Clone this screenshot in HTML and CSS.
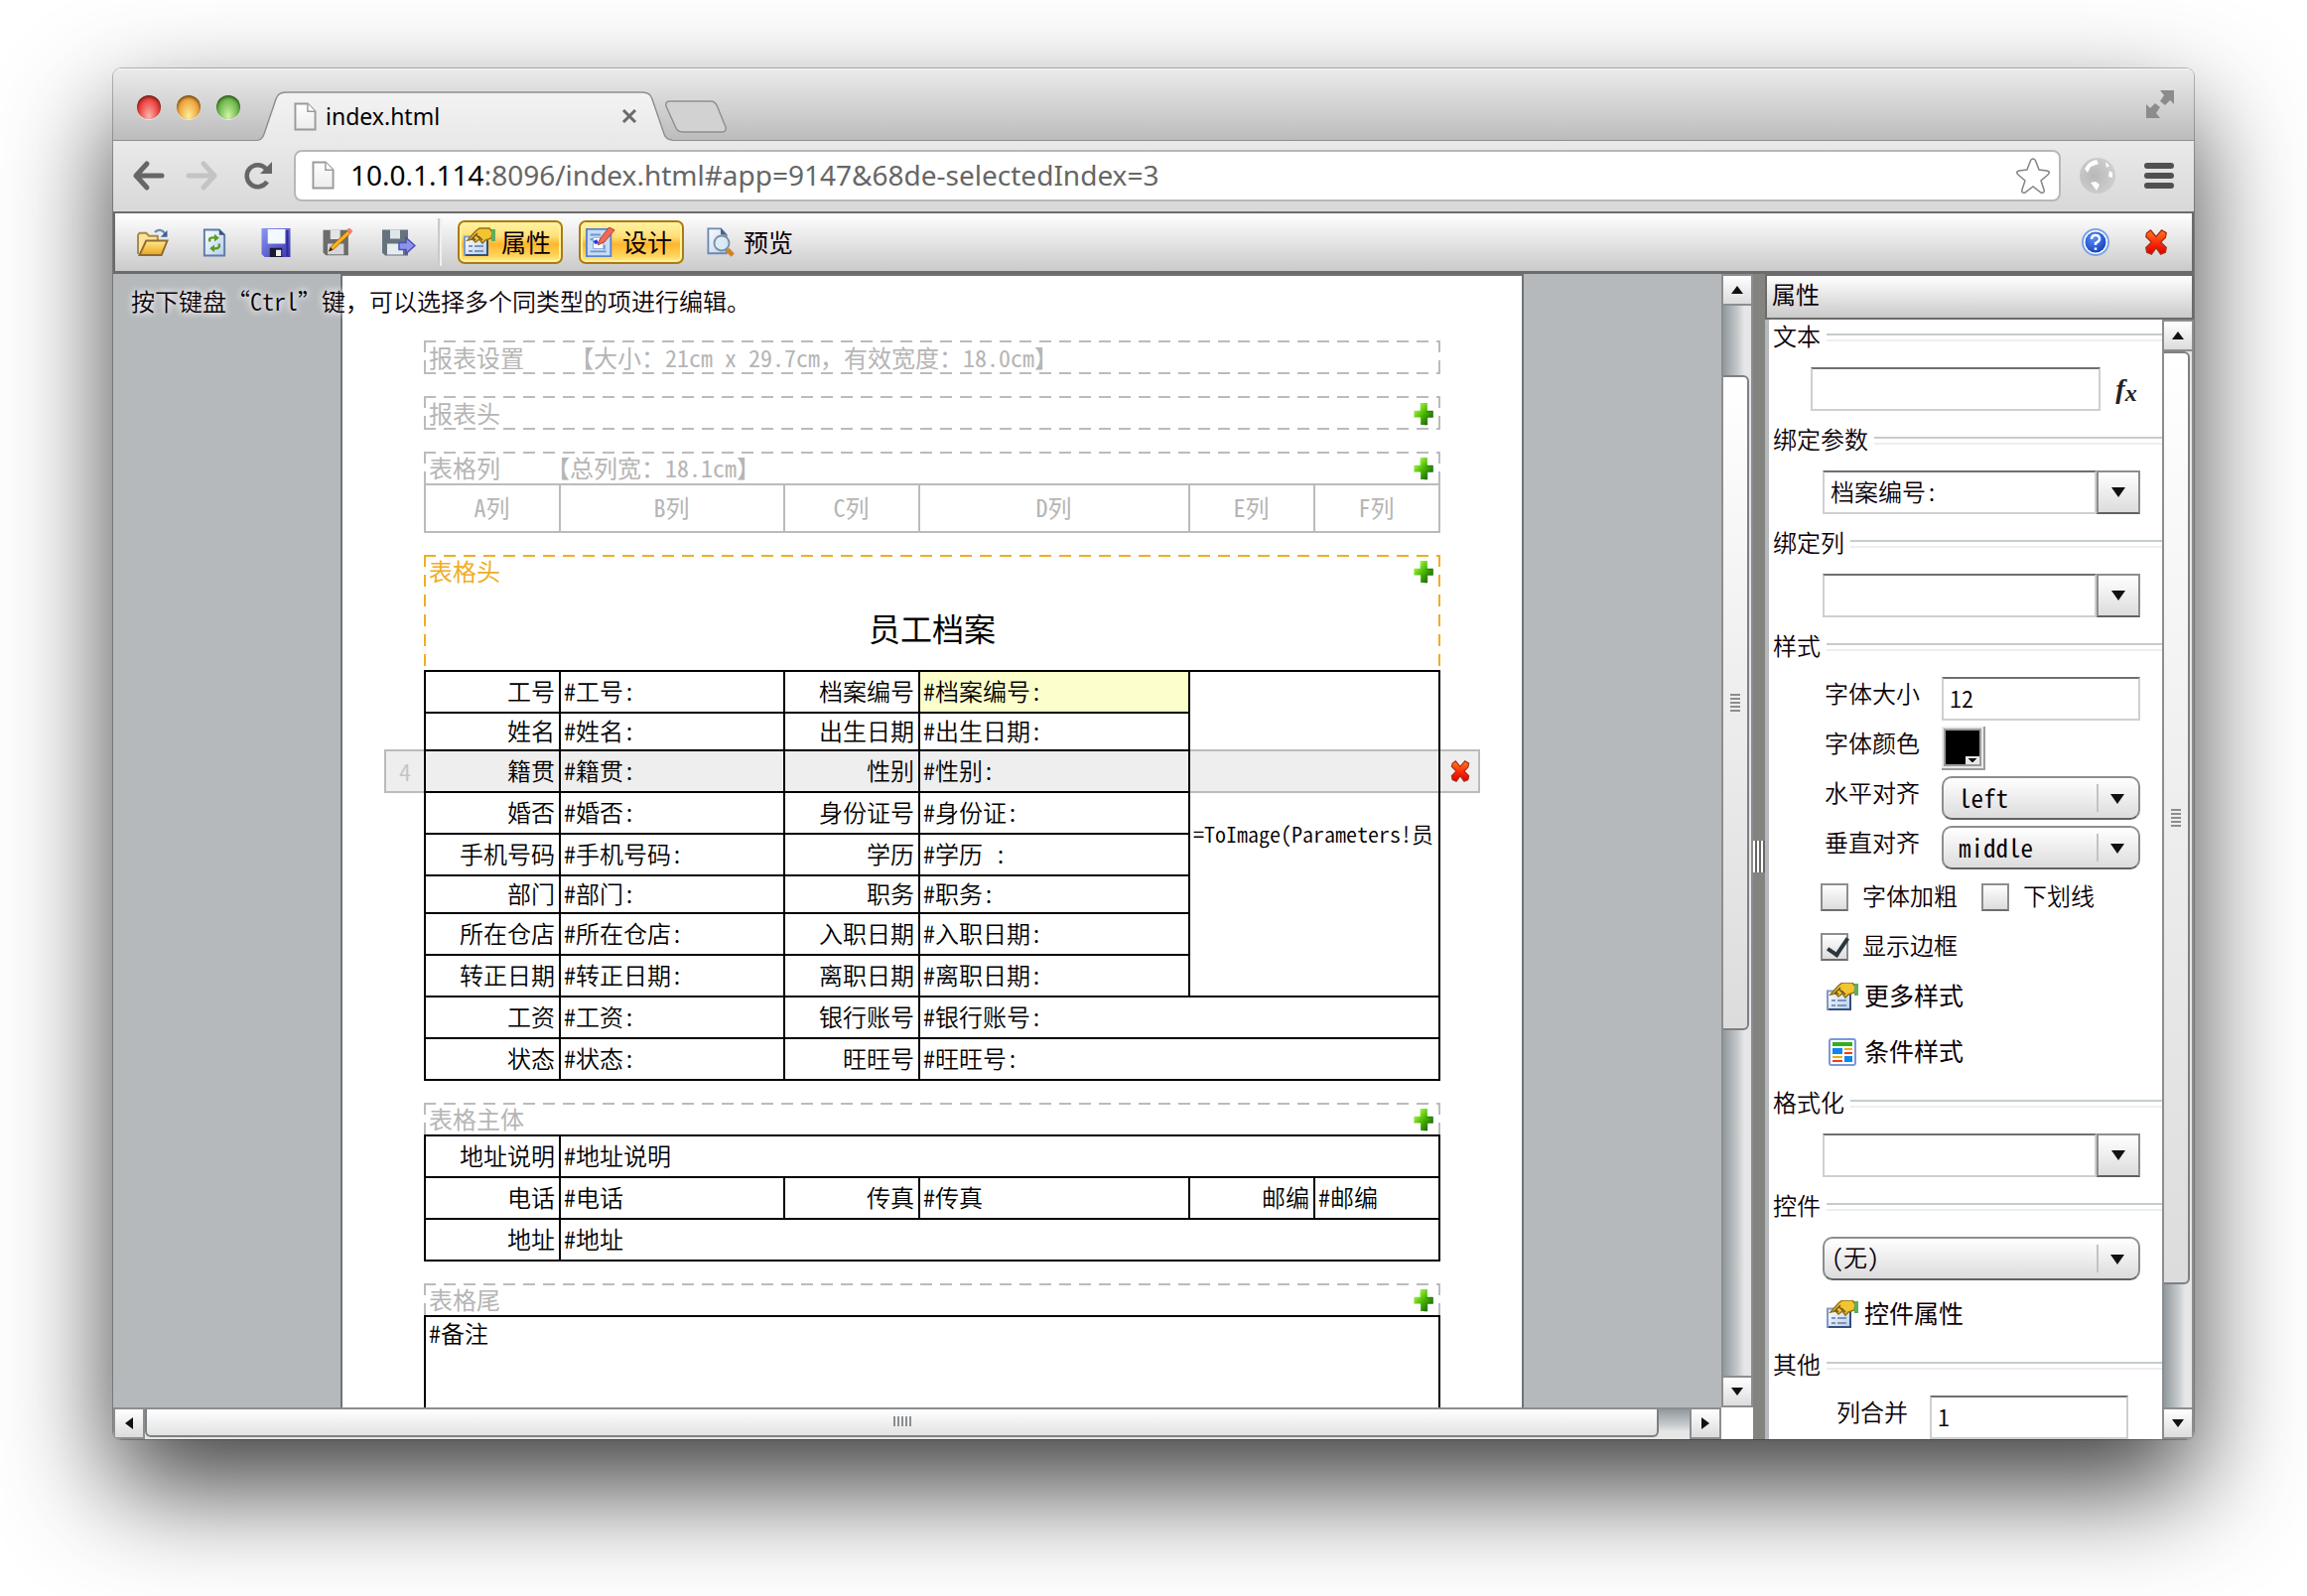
FILE: index.html
```html
<!DOCTYPE html>
<html lang="zh-CN">
<head>
<meta charset="utf-8">
<title>index.html</title>
<link rel="stylesheet" href="styles.css">
</head>
<body>
<svg class="defs" aria-hidden="true">
  <defs>
    <linearGradient id="gGreen" x1="0" y1="0" x2="1" y2="1"><stop offset=".1" stop-color="#b4ff50"/><stop offset=".5" stop-color="#49b800"/><stop offset="1" stop-color="#0a4a08"/></linearGradient>
    <linearGradient id="gRed" x1="0" y1="0" x2="0" y2="1"><stop offset="0" stop-color="#ff7a1c"/><stop offset=".6" stop-color="#fb2208"/><stop offset="1" stop-color="#d80000"/></linearGradient>
    <linearGradient id="gPaper" x1="0" y1="0" x2="1" y2="1"><stop offset="0" stop-color="#fff"/><stop offset="1" stop-color="#b4cdf0"/></linearGradient>
    <linearGradient id="gBlue" x1="0" y1="0" x2="1" y2="1"><stop offset="0" stop-color="#8d98f4"/><stop offset="1" stop-color="#3a36b0"/></linearGradient>
    <linearGradient id="gGold" x1="0" y1="0" x2="0" y2="1"><stop offset="0" stop-color="#ffe98c"/><stop offset="1" stop-color="#eda21a"/></linearGradient>
    <linearGradient id="gDoc" x1="0" y1="0" x2="0" y2="1"><stop offset="0" stop-color="#fff"/><stop offset="1" stop-color="#ececec"/></linearGradient>
    <linearGradient id="gTab" x1="0" y1="0" x2="0" y2="1"><stop offset="0" stop-color="#f3f3f3"/><stop offset="1" stop-color="#e9e9e9"/></linearGradient>
    <radialGradient id="gHelp" cx=".4" cy=".3" r=".8"><stop offset="0" stop-color="#5a8cff"/><stop offset="1" stop-color="#0a3cb4"/></radialGradient>
    <radialGradient id="gGlobe" cx=".4" cy=".5" r=".6"><stop offset="0" stop-color="#b8b8b8"/><stop offset="1" stop-color="#cfcfcf"/></radialGradient>
    <symbol id="i-doc" viewBox="0 0 24 30"><path d="M1.500 1.500H14.500L22.500 9.500V28.500H1.500Z" fill="url(#gDoc)" stroke="#9a9a9a" stroke-width="2"/><path d="M14.500 1.500V9.500H22.500" fill="#fff" stroke="#9a9a9a" stroke-width="1.500"/></symbol>
    <symbol id="i-plus" viewBox="0 0 20 24"><path d="M6.500 0H14V8H20V15H14V23H7V15H0V8H6.500Z" fill="url(#gGreen)"/><path d="M13 9h7v6h-6v8h-3" fill="none" stroke="#0b5a10" stroke-opacity=".5"/></symbol>
    <symbol id="i-cross" viewBox="0 0 24 28"><path d="M2 4L6 1L12 8L18 1L23 4L22 9L17 14L23 20L22 25L17 27L12 20L7 27L2 25L1 20L7 14L1 8Z" fill="url(#gRed)" stroke="#a8301c" stroke-width="1.500"/></symbol>
    <symbol id="i-props" viewBox="0 0 32 28"><path d="M1 8.500H24V27H1Z" fill="url(#gPaper)" stroke="#7f9bc4" stroke-width="2"/><path d="M2 27H24V9" fill="none" stroke="#35507c" stroke-width="2"/><path d="M5 18h4M11 18h9M5 23h4M11 23h9" stroke="#8094ba" stroke-width="2"/><path d="M4 12L12 3L16 0H26L29 4L28 10L22 12L19 15L16 11L12 14L9 11Z" fill="#f4c430" stroke="#94701a" stroke-width="1.500"/><path d="M9 9l3 3M12 6l4 4M15 8l4 4M8 11l6-6" stroke="#6d5620" stroke-width="1.500"/><path d="M28 1h4v12h-4z" fill="#5fae5c"/></symbol>
    <symbol id="i-open" viewBox="0 0 34 30"><path d="M1.500 27V7L3 5H10L13 8H22V13" fill="#fbe39a" stroke="#a88a48" stroke-width="2"/><path d="M3 28L10 13H32L26 28Z" fill="url(#gGold)" stroke="#8d6c30" stroke-width="2"/><path d="M19 4Q25-1 30 6" fill="none" stroke="#6c8cba" stroke-width="2.500"/><path d="M32 2V9H25Z" fill="#3d5f98"/></symbol>
    <symbol id="i-refresh" viewBox="0 0 24 30"><path d="M1.500 1.500H17L22.500 7V28.500H1.500Z" fill="url(#gPaper)" stroke="#5f7ca8" stroke-width="2"/><path d="M17 1V7H23" fill="#3d5474"/><path d="M7 14V11Q8 9 14 10M17 16V19Q16 22 9 21" fill="none" stroke="#5c9c1c" stroke-width="2.500"/><path d="M12 6L17 10L12 14ZM12 17L7 21L12 25Z" fill="#5c9c1c"/></symbol>
    <symbol id="i-save" viewBox="0 0 28 28"><path d="M0 0H28V28H3L0 25Z" fill="url(#gBlue)"/><path d="M6 1H23V15H6Z" fill="#f4f8ff"/><path d="M8 19H20V28H8Z" fill="#1a1a32"/><path d="M14 21H19V27H14Z" fill="#eee"/><path d="M25 2V27" stroke="#2e2aa0" stroke-width="2"/></symbol>
    <symbol id="i-saveas" viewBox="0 0 32 32"><path d="M0 2H28V30H3L0 27Z" fill="#6c6c6c"/><path d="M8 2H19V12H8Z" fill="#e4e4e4"/><path d="M5 17H23V29H5Z" fill="#d6d6d6"/><path d="M7 25L9 20L27 3L30 6L12 23Z" fill="#ffb31a" stroke="#a0620a"/><path d="M26 2L29-1L33 3L30 7Z" fill="#f48070"/><path d="M6 26L8 21L11 24Z" fill="#402410"/></symbol>
    <symbol id="i-export" viewBox="0 0 34 28"><path d="M0 1H26V27H3L0 24Z" fill="#66737c"/><path d="M8 1H18V10H8Z" fill="#dfe6ea"/><path d="M5 15H21V26H5Z" fill="#e6ecef"/><path d="M17 14H24V9L33 17L24 25V21H17Z" fill="#8c92ee" stroke="#4b50b4" stroke-width="1.500"/></symbol>
    <symbol id="i-design" viewBox="0 0 32 32"><path d="M1 2H27V31H1Z" fill="#c8dcf8" stroke="#5a84c4" stroke-width="2"/><path d="M5 8H16M5 13H9M5 26H22M20 19V24" stroke="#6c94d0" stroke-width="2"/><path d="M8 11H19V23H8Z" fill="#fff" stroke="#88a8d8"/><path d="M13 19L15 13L25 0L31 3L20 16Z" fill="#ee6a58" stroke="#b83a2c"/><path d="M8 15L12 13L14 17L10 18Z" fill="#1e3ce0"/></symbol>
    <symbol id="i-preview" viewBox="0 0 32 32"><path d="M1.500 1.500H15L21 8V28H1.500Z" fill="url(#gPaper)" stroke="#6e88ae" stroke-width="2"/><path d="M15 1V8H21" fill="#46607e"/><circle cx="16" cy="17" r="8" fill="#dcecf8" fill-opacity=".9" stroke="#7d8ea0" stroke-width="2"/><path d="M22 24L28 30" stroke="#d98020" stroke-width="5"/></symbol>
    <symbol id="i-cond" viewBox="0 0 28 28"><rect x="1" y="1" width="26" height="26" rx="2" fill="#fff" stroke="#7c98dc" stroke-width="2"/><path d="M4 4H24V8H4Z" fill="#2eb01c"/><path d="M4 10H14V16H4ZM16 18H24V24H16Z" fill="#0c86f0"/><path d="M16 11H24M4 19H14" stroke="#eab010" stroke-width="2"/><path d="M16 15H24M4 23H14" stroke="#f83a10" stroke-width="2"/></symbol>
  </defs>
</svg>

<div class="window">
  <header class="titlebar">
    <div class="lights"><button class="light red" aria-label="关闭"></button><button class="light amber" aria-label="最小化"></button><button class="light green" aria-label="缩放"></button></div>
    <div class="tab">
      <svg class="tab-shape" viewBox="0 0 417 51" preserveAspectRatio="none" aria-hidden="true"><path d="M0 50Q4 50 6 44L18 8Q20 1 28 1H387Q395 1 397 8L409 44Q411 50 417 50V51H0Z" fill="url(#gTab)"/><path d="M0 50Q4 50 6 44L18 8Q20 1 28 1H387Q395 1 397 8L409 44Q411 50 417 50" fill="none" stroke="#8f8f8f" stroke-width="1.500"/></svg>
      <svg class="doc" aria-hidden="true"><use href="#i-doc"/></svg>
      <span class="tab-title">index.html</span>
      <button class="tab-close" aria-label="关闭标签页"><svg viewBox="0 0 14 14"><path d="M1 1L13 13M13 1L1 13" stroke="#6a6a6a" stroke-width="3"/></svg></button>
    </div>
    <button class="newtab" aria-label="新标签页"><svg viewBox="0 0 66 34"><path d="M6 1H48Q53 1 55 6L64 28Q65 33 60 33H20Q14 33 12 28L2 6Q1 1 6 1Z" fill="#d2d2d2" stroke="#909090" stroke-width="1.500"/></svg></button>
    <button class="full" aria-label="全屏"><svg viewBox="0 0 28 28"><path d="M14 0H28V14L24 10L19 15L14 11L18 5ZM0 14L4 18L9 13L14 17L10 23L14 28H0Z" fill="#8c8c8c"/></svg></button>
  </header>

  <nav class="navbar">
    <button class="nav" aria-label="后退"><svg viewBox="0 0 32 28"><path d="M15 2L4 14L15 26M4 14H30" fill="none" stroke="#666" stroke-width="5" stroke-linecap="round" stroke-linejoin="round"/></svg></button>
    <button class="nav" aria-label="前进"><svg viewBox="0 0 32 28"><path d="M17 2L28 14L17 26M28 14H2" fill="none" stroke="#c4c4c4" stroke-width="5" stroke-linecap="round" stroke-linejoin="round"/></svg></button>
    <button class="nav" aria-label="重新加载"><svg viewBox="0 0 28 28"><path d="M24 20A11 11 0 1 1 23 7" fill="none" stroke="#666" stroke-width="4.500"/><path d="M29 0V12H17Z" fill="#666"/></svg></button>
    <div class="omnibox">
      <svg class="doc" aria-hidden="true"><use href="#i-doc"/></svg>
      <a class="url" href="#app"><b>10.0.1.114</b>:8096/index.html#app=9147&amp;68de-selectedIndex=3</a>
      <button class="star" aria-label="收藏"><svg viewBox="0 0 36 38"><path d="M18 2Q20 2 21 5L24 13L32 14Q36 15 33 18L26 24L29 33Q30 37 26 36L18 30L10 36Q6 37 7 33L10 24L3 18Q0 15 4 14L12 13L15 5Q16 2 18 2Z" fill="#fff" stroke="#848484" stroke-width="1.500"/></svg></button>
    </div>
    <svg class="globe" viewBox="0 0 38 40" aria-hidden="true"><circle cx="19" cy="20" r="18" fill="url(#gGlobe)"/><path d="M6 13Q10 5 18 4L20 8L12 11L9 17ZM12 27L17 26L21 29L18 35ZM31 15L34 17L34 22L30 21ZM27 6L31 10L28 12Z" fill="#fff"/></svg>
    <button class="menu" aria-label="菜单"><svg viewBox="0 0 30 28"><path d="M3 4H27M3 14H27M3 24H27" stroke="#505050" stroke-width="6" stroke-linecap="round"/></svg></button>
  </nav>

  <div class="toolbar">
    <button class="tool" aria-label="打开"><svg><use href="#i-open"/></svg></button>
    <button class="tool" aria-label="刷新"><svg><use href="#i-refresh"/></svg></button>
    <button class="tool" aria-label="保存"><svg><use href="#i-save"/></svg></button>
    <button class="tool" aria-label="另存为"><svg><use href="#i-saveas"/></svg></button>
    <button class="tool" aria-label="导出"><svg><use href="#i-export"/></svg></button>
    <span class="sep"></span>
    <button class="mode on"><svg><use href="#i-props"/></svg>属性</button>
    <button class="mode on"><svg><use href="#i-design"/></svg>设计</button>
    <button class="mode"><svg><use href="#i-preview"/></svg>预览</button>
    <span class="push"></span>
    <button class="tool help" aria-label="帮助"><svg viewBox="0 0 28 28"><circle cx="14" cy="14" r="13" fill="#fff" stroke="#7da2e8" stroke-width="2"/><circle cx="14" cy="14" r="10.500" fill="url(#gHelp)"/><path d="M10 11Q10 7 14 7T18 11Q18 13 14 15V17M14 19.500V22" fill="none" stroke="#fff" stroke-width="2.500"/></svg></button>
    <button class="tool quit" aria-label="退出"><svg><use href="#i-cross"/></svg></button>
  </div>

  <div class="workspace">
    <section class="designer">
      <div class="canvas">
        <p class="hint">按下键盘“<span class="half">Ctrl</span>”键，可以选择多个同类型的项进行编辑。</p>
        <div class="paper">
          <section class="band">
            <h2 class="band-head closed">报表设置<span class="note">【大小：<span class="half">21cm x 29.7cm</span>，有效宽度：<span class="half">18.0cm</span>】</span></h2>
          </section>
          <section class="band">
            <h2 class="band-head closed">报表头<button class="add" aria-label="添加"><svg><use href="#i-plus"/></svg></button></h2>
          </section>
          <section class="band">
            <h2 class="band-head">表格列<span class="note">【总列宽：<span class="half">18.1cm</span>】</span><button class="add" aria-label="添加"><svg><use href="#i-plus"/></svg></button></h2>
            <table class="grid columns half">
              <colgroup><col class="c1"><col class="c2"><col class="c3"><col class="c4"><col class="c5"><col class="c6"></colgroup>
              <tr><th>A列</th><th>B列</th><th>C列</th><th>D列</th><th>E列</th><th>F列</th></tr>
            </table>
          </section>
          <section class="band">
            <div class="band-body active">
              <h2 class="band-title">表格头<button class="add" aria-label="添加"><svg><use href="#i-plus"/></svg></button></h2>
              <h1 class="report-title">员工档案</h1>
            </div>
            <div class="grid-wrap">
              <div class="row-strip"><span class="row-no half">4</span><button class="row-del" aria-label="删除行"><svg><use href="#i-cross"/></svg></button></div>
              <table class="grid half">
                <colgroup><col class="c1"><col class="c2"><col class="c3"><col class="c4"><col class="c5"><col class="c6"></colgroup>
                <tr><th>工号</th><td>#工号:</td><th>档案编号</th><td class="picked">#档案编号:</td><td class="photo" colspan="2" rowspan="8">=ToImage(Parameters!员</td></tr>
                <tr class="low"><th>姓名</th><td>#姓名:</td><th>出生日期</th><td>#出生日期:</td></tr>
                <tr><th>籍贯</th><td>#籍贯:</td><th>性别</th><td>#性别:</td></tr>
                <tr><th>婚否</th><td>#婚否:</td><th>身份证号</th><td>#身份证:</td></tr>
                <tr><th>手机号码</th><td>#手机号码:</td><th>学历</th><td>#学历 :</td></tr>
                <tr class="low"><th>部门</th><td>#部门:</td><th>职务</th><td>#职务:</td></tr>
                <tr><th>所在仓店</th><td>#所在仓店:</td><th>入职日期</th><td>#入职日期:</td></tr>
                <tr><th>转正日期</th><td>#转正日期:</td><th>离职日期</th><td>#离职日期:</td></tr>
                <tr><th>工资</th><td>#工资:</td><th>银行账号</th><td colspan="3">#银行账号:</td></tr>
                <tr><th>状态</th><td>#状态:</td><th>旺旺号</th><td colspan="3">#旺旺号:</td></tr>
              </table>
            </div>
          </section>
          <section class="band">
            <h2 class="band-head">表格主体<button class="add" aria-label="添加"><svg><use href="#i-plus"/></svg></button></h2>
            <table class="grid half">
              <colgroup><col class="c1"><col class="c2"><col class="c3"><col class="c4"><col class="c5"><col class="c6"></colgroup>
              <tr><th>地址说明</th><td colspan="5">#地址说明</td></tr>
              <tr><th>电话</th><td>#电话</td><th>传真</th><td>#传真</td><th>邮编</th><td>#邮编</td></tr>
              <tr><th>地址</th><td colspan="5">#地址</td></tr>
            </table>
          </section>
          <section class="band">
            <h2 class="band-head">表格尾<button class="add" aria-label="添加"><svg><use href="#i-plus"/></svg></button></h2>
            <table class="grid half">
              <tr class="remark"><td>#备注</td></tr>
            </table>
          </section>
        </div>
      </div>
      <div class="vbar">
        <button class="step" aria-label="向上"><i class="tri up"></i></button>
        <div class="track"><span class="lead"></span><span class="thumb"><i class="grip"></i></span><span class="rest"></span></div>
        <button class="step" aria-label="向下"><i class="tri down"></i></button>
      </div>
      <div class="hbar">
        <button class="step" aria-label="向左"><i class="tri left"></i></button>
        <div class="track"><span class="thumb"><i class="grip"></i></span><span class="rest"></span></div>
        <button class="step" aria-label="向右"><i class="tri right"></i></button>
      </div>
      <div class="corner"></div>
    </section>

    <div class="divider"><i></i></div>

    <aside class="panel">
      <h2 class="panel-head">属性</h2>
      <div class="panel-main">
        <form class="props">
          <h3 class="legend">文本</h3>
          <div class="group wide"><input class="field" aria-label="文本"><button type="button" class="fx" aria-label="表达式"><i>f</i><sub>x</sub></button></div>
          <h3 class="legend">绑定参数</h3>
          <div class="group"><div class="combo"><input class="field" aria-label="绑定参数" value="档案编号:"><button type="button" class="drop" aria-label="展开"><i class="tri down"></i></button></div></div>
          <h3 class="legend">绑定列</h3>
          <div class="group"><div class="combo"><input class="field" aria-label="绑定列"><button type="button" class="drop" aria-label="展开"><i class="tri down"></i></button></div></div>
          <h3 class="legend">样式</h3>
          <div class="group rows">
            <div class="row"><label for="fs">字体大小</label><input id="fs" class="field" value="12"></div>
            <div class="row"><label for="fc">字体颜色</label><button type="button" id="fc" class="swatch"><span><i class="tri down"></i></span></button></div>
            <div class="row"><label for="ha">水平对齐</label><div class="pick"><select id="ha"><option>left</option></select><i class="tri down"></i></div></div>
            <div class="row"><label for="va">垂直对齐</label><div class="pick"><select id="va"><option>middle</option></select><i class="tri down"></i></div></div>
            <div class="checks"><input type="checkbox" id="bold"><label for="bold">字体加粗</label><input type="checkbox" id="under"><label for="under">下划线</label></div>
            <div class="checks"><input type="checkbox" id="border" checked><label for="border">显示边框</label></div>
            <button type="button" class="more"><svg><use href="#i-props"/></svg>更多样式</button>
            <button type="button" class="more spaced"><svg><use href="#i-cond"/></svg>条件样式</button>
          </div>
          <h3 class="legend">格式化</h3>
          <div class="group"><div class="combo"><input class="field" aria-label="格式化"><button type="button" class="drop" aria-label="展开"><i class="tri down"></i></button></div></div>
          <h3 class="legend">控件</h3>
          <div class="group rows">
            <div class="pick long"><select aria-label="控件"><option>(无)</option></select><i class="tri down"></i></div>
            <button type="button" class="more spaced"><svg><use href="#i-props"/></svg>控件属性</button>
          </div>
          <h3 class="legend">其他</h3>
          <div class="group merge"><label for="cm">列合并</label><input id="cm" class="field" value="1"></div>
        </form>
        <div class="vbar">
          <button class="step" aria-label="向上"><i class="tri up"></i></button>
          <div class="track"><span class="thumb"><i class="grip"></i></span><span class="rest"></span></div>
          <button class="step" aria-label="向下"><i class="tri down"></i></button>
        </div>
      </div>
    </aside>
  </div>
</div>
</body>
</html>
```
FILE: styles.css
```css
* { box-sizing: border-box; }

body {
  margin: 0;
  padding: 69px 114px 158px;
  height: 100vh;
  background: #fff;
  color: #0b0006;
  font: 350 24px/32px "Noto Sans CJK SC", sans-serif;
  overflow: hidden;
}

button, input, select { font: inherit; color: inherit; margin: 0; padding: 0; }
button { display: flex; align-items: center; justify-content: center; border: 0; background: none; flex: none; }
h1, h2, h3, p { margin: 0; font-weight: inherit; font-size: inherit; }
svg { display: block; flex: none; overflow: visible; }
.defs { position: absolute; width: 0; height: 0; }

/* half-width Latin letters and digits, two to a Han character */
.half, .field, .pick select { font-feature-settings: "hwid"; }

.window {
  display: flex;
  flex-direction: column;
  height: 100%;
  border-radius: 8px;
  overflow: hidden;
  box-shadow: 0 0 0 1px rgba(0, 0, 0, .25), 0 48px 108px rgba(0, 0, 0, .76);
}

/* browser frame */
.titlebar {
  display: flex;
  align-items: flex-end;
  flex: none;
  height: 73px;
  background: linear-gradient(#ebebeb, #bcbcbc);
  border-bottom: 1px solid #8f8f8f;
  box-shadow: inset 0 1px #f8f8f8;
}
.lights { display: flex; gap: 16px; padding: 0 18px 21px 24px; width: 146px; }
.light { width: 24px; height: 24px; border-radius: 50%; box-shadow: inset 0 2px 3px rgba(0, 0, 0, .5), 0 1px rgba(255, 255, 255, .6); }
.red { background: radial-gradient(ellipse at 50% 90%, #ffb4b0, #e8423c 60%, #b81c1c); }
.amber { background: radial-gradient(ellipse at 50% 90%, #fff09a, #eda33c 60%, #b86c10); }
.green { background: radial-gradient(ellipse at 50% 90%, #d4f5a8, #6cb84c 60%, #3c8420); }
.tab { position: relative; display: flex; align-items: center; width: 417px; height: 50px; padding: 0 36px 0 36px; margin-bottom: -1px; font: 23px/32px "Noto Sans", sans-serif; color: #000; }
.tab > * { position: relative; }
.tab .tab-shape { position: absolute; inset: 0; width: 100%; height: 100%; }
.doc { width: 23px; height: 29px; }
.tab-title { flex: 1; margin-left: 9px; }
.tab-close svg { width: 14px; height: 14px; }
.newtab { margin: 0 auto 7px -9px; }
.newtab svg { width: 66px; height: 33px; }
.full { margin: 0 20px 22px 0; }
.full svg { width: 28px; height: 28px; }

.navbar { display: flex; align-items: center; flex: none; height: 71px; padding: 0 20px 2px 19px; background: linear-gradient(#eaeaea, #d8d8d8); }
.nav { width: 55px; justify-content: flex-start; }
.nav svg { width: 32px; height: 28px; }
.omnibox { display: flex; align-items: center; flex: 1; height: 52px; margin: 0 18px 0 -2px; padding: 0 8px 0 16px; background: #fff; border: 2px solid #b8b8b8; border-radius: 8px; }
.url { flex: 1; margin-left: 16px; color: #666; text-decoration: none; font: 28px/36px "Noto Sans", sans-serif; padding-bottom: 2px; }
.url b { color: #000; font-weight: 400; }
.star svg { width: 36px; height: 38px; }
.globe { width: 38px; height: 40px; }
.menu { margin-left: 28px; }
.menu svg { width: 30px; height: 28px; }

/* application toolbar */
.toolbar { display: flex; align-items: center; flex: none; height: 63px; border: 2px solid #6b6b6b; border-bottom-width: 3px; background: linear-gradient(#fff, #cacaca); padding: 0 19px 0 7px; }
.tool { width: 62px; height: 44px; }
.tool svg { width: 34px; height: 29px; }
.sep { width: 4px; height: 48px; margin: 0 16px 0 8px; border-left: 2px solid #c5cccc; border-right: 2px solid #f0f0f0; }
.mode { height: 44px; gap: 6px; padding: 0 10px 3px 4px; margin-right: 16px; border: 2px solid transparent; border-radius: 7px; font-size: 25px; font-weight: 400; }
.mode svg { width: 32px; height: 30px; margin-top: 2px; }
.on { border-color: #ad7a10; background: linear-gradient(#fff3a0, #ffe07a 35%, #ffb52c 55%, #ffd55c 85%, #fff08c); box-shadow: inset 0 0 0 2px #fff1a0; }
.push { flex: 1; }
.help svg { width: 28px; height: 28px; }
.quit { width: 28px; margin: 0 3px 0 16px; }
.quit svg { width: 24px; height: 26px; }

/* workspace */
.workspace { display: flex; flex: 1; min-height: 0; }
.designer { display: grid; grid-template: minmax(0, 1fr) 32px / minmax(0, 1fr) 32px; flex: 1; min-width: 0; }
.canvas { position: relative; display: flex; justify-content: center; padding-left: 30px; background: #b5b9bc; overflow: hidden; }
.hint { position: absolute; left: 18px; top: 11px; white-space: nowrap; text-shadow: 0 0 6px #fff, 0 0 8px #fff; }
.paper { flex: none; width: 1192px; height: 1600px; padding: 65px 82px; background: #fff; border: 2px solid #6f7375; border-width: 2px 2px 0; }
.corner { background: #fff; }

.band { margin-bottom: 22px; color: #b5b5b5; }
.band-head, .band-body {
  --dash: #bbb;
  height: 32px;
  background:
    repeating-linear-gradient(90deg, var(--dash) 0 12px, transparent 12px 20px) 0 0 / 100% 2px no-repeat,
    repeating-linear-gradient(var(--dash) 0 12px, transparent 12px 20px) 0 0 / 2px 100% no-repeat,
    repeating-linear-gradient(var(--dash) 0 12px, transparent 12px 20px) 100% 0 / 2px 100% no-repeat;
}
.band-head, .band-title { display: flex; align-items: center; height: 32px; padding: 0 7px 0 5px; font-weight: 400; }
.band-head.closed {
  height: 34px;
  background:
    repeating-linear-gradient(90deg, var(--dash) 0 12px, transparent 12px 20px) 0 0 / 100% 2px no-repeat,
    repeating-linear-gradient(90deg, var(--dash) 0 12px, transparent 12px 20px) 0 100% / 100% 2px no-repeat,
    repeating-linear-gradient(var(--dash) 0 12px, transparent 12px 20px) 0 0 / 2px 100% no-repeat,
    repeating-linear-gradient(var(--dash) 0 12px, transparent 12px 20px) 100% 0 / 2px 100% no-repeat;
}
.note { margin-left: 46px; }
.add { margin-left: auto; padding-top: 3px; }
.add svg { width: 20px; height: 23px; }
.band-body { height: 116px; }
.active { --dash: #f0ad24; color: #f0ad24; }
.report-title { padding-top: 17px; font-size: 32px; line-height: 48px; font-weight: 400; text-align: center; color: #000; }

.grid { width: 1024px; table-layout: fixed; border-collapse: collapse; color: #000; }
.grid th, .grid td { height: 42px; padding: 0 4px 2px 3px; border: 2px solid #000; font-weight: inherit; line-height: 32px; text-align: left; white-space: nowrap; overflow: hidden; }
.grid th { text-align: right; }
.grid .low th, .grid .low td { height: 38px; }
.c1, .c3 { width: 136px; }
.c2 { width: 226px; }
.c4 { width: 272px; }
.c5, .c6 { width: 126px; }
.columns { color: #b5b5b5; }
.columns th { height: 48px; border-color: #bbb; text-align: center; font-weight: 400; }
.grid .picked { background: #fcffcc; }
.grid .photo { font-size: 22px; }
.grid .remark td { height: 160px; vertical-align: top; }

.grid-wrap { position: relative; isolation: isolate; }
.row-strip { position: absolute; z-index: -1; left: -40px; right: -40px; top: 80px; height: 44px; display: flex; align-items: center; justify-content: space-between; padding: 0 8px 0 13px; background: #eee; border: 2px solid #bbb; color: #c4c4c4; }
.row-del svg { width: 20px; height: 22px; }

/* scroll bars */
.tri { display: block; border: 6px solid transparent; width: 0; height: 0; }
.up { border-width: 0 6px 8px; border-bottom-color: #111; }
.down { border-width: 8px 6px 0; border-top-color: #111; }
.left { border-width: 6px 8px 6px 0; border-right-color: #111; }
.right { border-width: 6px 0 6px 8px; border-left-color: #111; }
.vbar, .hbar { display: flex; flex: none; }
.vbar { flex-direction: column; width: 32px; }
.step { width: 32px; height: 32px; border: 2px solid #8b8e90; background: linear-gradient(#fff, #dcdcdc); }
.track { display: flex; flex: 1; min-width: 0; min-height: 0; }
.vbar .track { flex-direction: column; border: solid #8b8e90; border-width: 0 2px; background: linear-gradient(90deg, #929a9d, #c4c8ca 50%, #e6e6e6 75%); }
.hbar .track { border-top: 2px solid #8b8e90; background: linear-gradient(#929a9d, #c4c8ca 50%, #e6e6e6 75%); }
.thumb { display: flex; align-items: center; justify-content: center; border: 2px solid #7d8082; }
.vbar .thumb { width: 26px; border-left: 0; border-radius: 0 6px 6px 0; background: linear-gradient(#fff, #dcdcdc); }
.hbar .thumb { height: 28px; padding-bottom: 2px; border-top: 0; border-radius: 0 0 6px 6px; background: linear-gradient(#fff, #e2e2e2); }
.vbar .grip { width: 10px; height: 18px; background: repeating-linear-gradient(#8b8e90 0 2px, transparent 2px 4px); }
.hbar .grip { width: 18px; height: 10px; background: repeating-linear-gradient(90deg, #8b8e90 0 2px, transparent 2px 4px); }
.designer .vbar .lead { flex: 70; }
.designer .vbar .thumb { flex: 659; }
.designer .vbar .rest { flex: 349; }
.hbar .thumb { flex: 1524; }
.hbar .rest { flex: 31; }
.panel .thumb { flex: 940; }
.panel .rest { flex: 124; }

.divider { display: flex; align-items: center; flex: none; width: 12px; background: #83837f; }
.divider i { width: 12px; height: 32px; background: repeating-linear-gradient(90deg, #fff 0 2px, #666 2px 4px); }

/* properties panel */
.panel { display: flex; flex-direction: column; flex: none; width: 432px; }
.panel-head { flex: none; height: 46px; padding: 2px 5px; border: 2px solid #6b6b6b; background: linear-gradient(#fff, #cacaca); font-weight: 400; }
.panel-main { display: flex; flex: 1; min-height: 0; border-left: 4px solid #b5b9bc; }
.props { flex: 1; min-width: 0; background: #fff; overflow: hidden; }
.legend { display: flex; align-items: center; gap: 6px; padding-left: 4px; line-height: 32px; }
.legend::after { content: ""; flex: 1; height: 4px; margin-top: 4px; border-top: 2px solid #c5cccc; border-bottom: 2px solid #eee; }
.group { padding: 16px 22px 12px 54px; }
.wide { display: flex; gap: 12px; padding-left: 42px; }
.field { flex: 1; width: 100%; min-width: 0; height: 44px; padding: 0 6px 4px; border: 2px solid #cfcfcf; border-top-color: #6f6f6f; border-radius: 0; background: #fff; outline: 0; }
.fx { width: 28px; font: italic bold 28px/36px "Liberation Serif", serif; color: #222; }
.fx sub { padding-top: 8px; font-size: 24px; line-height: 24px; vertical-align: baseline; }
.combo { display: flex; }
.drop { width: 44px; height: 44px; border: 2px solid #8b8e90; border-bottom-color: #5f6264; background: linear-gradient(#fff, #dcdcdc); }
.drop .tri, .pick .tri { border-width: 10px 7px 0; }
.rows { display: flex; flex-direction: column; gap: 6px; }
.row { display: flex; }
.row label { width: 120px; padding-left: 2px; line-height: 32px; }
.swatch { align-items: stretch; width: 44px; height: 44px; padding: 2px; border: solid #9a9c9e; border-width: 0 2px 2px 0; background: #e8e8e8; }
.swatch span { display: flex; align-items: flex-end; justify-content: flex-end; flex: 1; background: #000; border: 2px solid #9a9c9e; }
.swatch .tri { width: 14px; height: 8px; border: solid #e8e8e8; border-width: 2px 3px; background: #111; clip-path: none; }
.swatch .tri { background: conic-gradient(from 315deg at 50% 100%, #111 0 90deg, #e8e8e8 0) 0 0 / 100% 100%; }
.pick { position: relative; flex: 1; }
.pick select { appearance: none; display: block; width: 100%; height: 44px; padding: 0 60px 3px 15px; border: 2px solid #8b8e90; border-bottom-color: #5f6264; border-radius: 10px; background: linear-gradient(#c0c4c6, #c0c4c6) right 40px center / 2px 28px no-repeat, linear-gradient(#fff, #dcdcdc); font-size: 25px; font-weight: 400; }
.pick .tri { position: absolute; right: 16px; top: 18px; pointer-events: none; }
.pick.long select { padding: 0 60px 5px 7px; font-size: 24px; font-weight: 350; }
.checks { display: flex; align-items: center; height: 44px; }
.checks input { appearance: none; width: 28px; height: 28px; margin-left: -2px; border: 2px solid #8b8e90; border-bottom-color: #6b6e70; background: linear-gradient(#fff, #dcdcdc); }
.checks input:checked::after { content: ""; display: block; width: 9px; height: 18px; margin: -1px 0 0 9px; border: solid #2c363c; border-width: 0 4px 4px 0; transform: rotate(34deg); }
.checks label { margin: 0 26px 5px 14px; }
.more { justify-content: flex-start; gap: 6px; height: 44px; padding: 0 0 4px 4px; font-size: 25px; font-weight: 400; }
.more svg { width: 32px; height: 28px; margin-top: 4px; }
.more.spaced { margin-top: 6px; }
.merge { display: flex; padding-right: 34px; }
.merge label { width: 108px; padding-left: 14px; line-height: 32px; }
```
